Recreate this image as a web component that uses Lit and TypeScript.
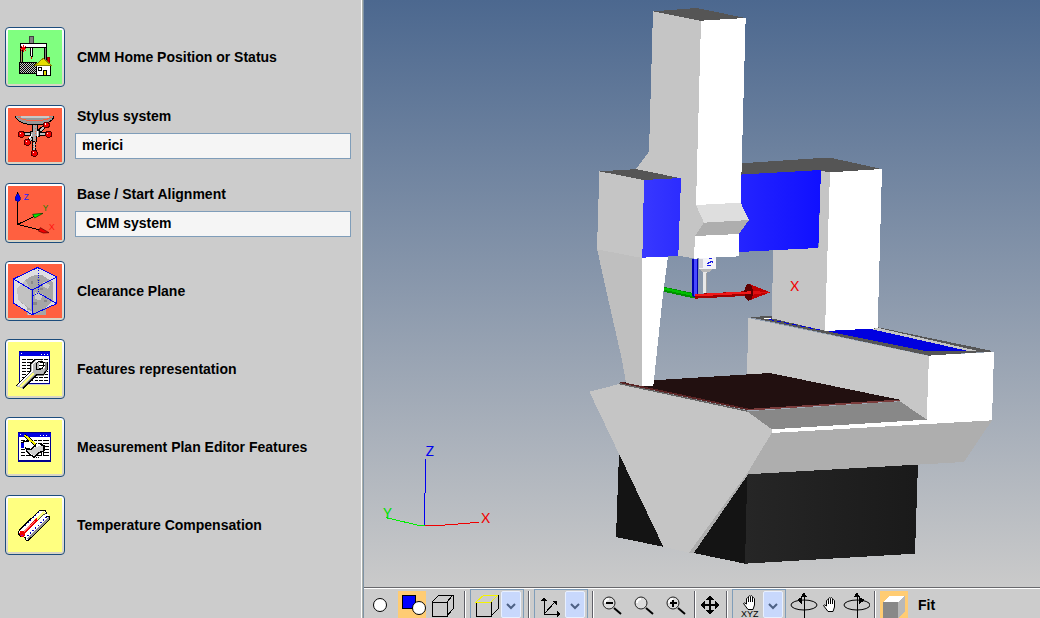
import { LitElement, html, svg, css } from "lit";
import { customElement } from "lit/decorators.js";

const homeIcon = svg`
  <defs><pattern id="mesh" width="6" height="6" patternUnits="userSpaceOnUse">
    <rect width="6" height="6" fill="#c8c8c8"/><rect width="3" height="3" fill="#000"/><rect x="3" y="3" width="3" height="3" fill="#000"/>
  </pattern></defs>
  <g stroke="#000" stroke-width="3">
    <rect x="89" y="49" width="12" height="22" fill="#808080" stroke="#404040"/>
    <rect x="62" y="82" width="6" height="46" fill="#a8a860"/>
    <rect x="132" y="82" width="8" height="40" fill="#808080"/>
    <rect x="62" y="70" width="78" height="12" fill="#fff"/>
    <path d="M91 82V105L95 112L98 105V82Z" fill="#fff"/>
    <rect x="58" y="127" width="52" height="34" fill="url(#mesh)"/>
    <rect x="142" y="112" width="6" height="16" fill="#e00000" stroke="#900000"/>
    <rect x="109" y="135" width="43" height="31" fill="#fff"/>
    <path d="M130 115L105 136H154Z" fill="#e6de00" stroke="#8a8400"/>
    <rect x="115" y="143" width="9" height="9" fill="#fff"/>
    <path d="M131 166V152H140V166" fill="#e6de00"/>
  </g>
  <path d="M95 112V118M70 76V96M61 86H79M64 79L77 93M77 79L64 93" stroke="#f00000" stroke-width="3"/>`;

const stylusIcon = svg`
  <path d="M46 289H162C160 301 144 309 126 312H86C64 309 49 302 46 289Z" fill="#989898"/>
  <path d="M54 291C66 300 82 302 104 302C130 302 146 298 156 291" fill="none" stroke="#ff6040" stroke-width="3"/>
  <path d="M64 291H148" stroke="#c8c8c8" stroke-width="6"/>
  <path d="M46 289C49 302 64 309 86 313H126C144 309 160 301 162 289" fill="none" stroke="#000" stroke-width="3"/>
  <path d="M104 342H140M64 343H92M84 366L104 344M110 340L136 318M103 352V396" stroke="#000" stroke-width="12"/>
  <path d="M104 342H140M64 343H92M84 366L104 344M110 340L136 318M103 352V396" stroke="#c0c0c0" stroke-width="6"/>
  <path d="M97 314H112V332H118V350H110V364H96V352H90V334H97Z" fill="#a8a8a8" stroke="#000" stroke-width="3"/>
  <path d="M106 316V388M100 366V390" stroke="#ff6040" stroke-width="3" stroke-dasharray="3 5"/>
  <path d="M112 334V350M96 344L88 356" stroke="#fff" stroke-width="3"/>
  ${[[64, 343], [146, 343], [139, 315], [82, 367], [103, 400]].map(([x, y]) => svg`
    <circle cx=${x} cy=${y} r="9" fill="#f00000" stroke="#500000" stroke-width="3"/>
    <rect x=${x - 5} y=${y - 5} width="4" height="4" fill="#fff"/>`)}`;

const axesIcon = svg`
  <path d="M53 78V148L104 124M53 148L120 165" fill="none" stroke="#000" stroke-width="3"/>
  <path d="M53 52L46 66V76L53 80L60 76V66Z" fill="#0000f0" stroke="#000080" stroke-width="2"/>
  <path d="M129 115L98 118L104 129Z" fill="#00f000" stroke="#003000" stroke-width="2" shape-rendering="auto"/>
  <path d="M147 173L121 158L115 168L130 174Z" fill="#f00000" stroke="#500000" stroke-width="2" shape-rendering="auto"/>
  <path d="M53 50L51 56H55Z" fill="#000"/>
  <g class="axis"><text x="71" y="74" font-size="25" fill="#2020ff">Z</text>
  <text x="128" y="109" font-size="25" fill="#208000">Y</text>
  <text x="146" y="166" font-size="27" fill="#ff1010">X</text></g>`;

const clearanceIcon = svg`
  <path d="M40 312L114 277L170 306V386L96 419L40 384Z" fill="#dedee2"/>
  <path d="M50 342L78 314L96 302L126 300L160 322V376L138 396V419H82V398L56 376Z" fill="#a6a6a6"/>
  <path d="M50 342L76 316L94 346V404L56 376Z" fill="#c2c2c2"/>
  <path d="M82 404L98 410V419H84ZM106 352L128 358L122 376L106 372ZM128 320L150 330L144 342L128 334Z" fill="#cdcdcd"/>
  <path d="M92 318H98V326H92ZM112 312H120V318H112ZM120 338H128V345H120ZM100 382H110V390H100ZM132 374H140V382H132Z" fill="#888"/>
  <path d="M40 384L62 402L76 408" stroke="#ff6040" stroke-width="5" fill="none"/>
  <path d="M40 312L114 277L170 306V386L96 419L40 384ZM40 312L96 345L170 306M96 345V419M116 354L170 386" fill="none" stroke="#0000f0" stroke-width="3"/>
  <path d="M115 279V354L96 364" fill="none" stroke="#0000f0" stroke-width="3" stroke-dasharray="3 4"/>`;

const sheet = (x: number, y: number, w: number, h: number, lines: number) => svg`
  <rect x=${x} y=${y} width=${w} height=${h} fill="#fff"/>
  <path d=${Array.from({ length: lines }, (_, i) => `M${x + 9} ${y + 25 + i * 9}H${x + w - 6}`).join("")} stroke="#000" stroke-width="3" stroke-dasharray="12 4 18 4 9 4"/>
  <rect x=${x + 1} y=${y + 1} width=${w - 3} height=${h - 2} fill="none" stroke="#000090" stroke-width="3"/>
  <rect x=${x} y=${y} width=${w} height="16" fill="#0000e0"/>
  <path d="M${x + 6} ${y + 8}H${x + 9}M${x + 66} ${y + 10}H${x + 69}M${x + 75} ${y + 10}H${x + 78}M${x + 84} ${y + 10}H${x + 87}" stroke="#fff" stroke-width="3"/>
  <path d="M${x} ${y + 1}H${x + w}" stroke="#000090" stroke-width="3"/>`;

const wrenchIcon = svg`
  <rect x="60" y="146" width="90" height="8" fill="#d0d0d0"/>
  ${sheet(57, 51, 93, 99, 8)}
  <path d="M48 156L92 112V92L106 76H130L116 88V104H132L141 90V108L130 122H110L68 164Z" fill="#b8b8b8"/>
  <path d="M68 164L110 122H130L139 108V84" fill="none" stroke="#808080" stroke-width="6"/>
  <path d="M60 158L100 118" stroke="#ffff80" stroke-width="7"/>
  <path d="M54 154L97 111V92L108 81H124" fill="none" stroke="#fff" stroke-width="4"/>
  <path d="M48 156L92 112V90L106 76H130M128 82H116L108 90V106H122L130 98V84M141 88V108L130 122H110L68 164" fill="none" stroke="#000" stroke-width="3"/>`;

const editorIcon = svg`
  ${sheet(54, 294, 99, 90, 6)}
  <path d="M56 382H151" stroke="#000090" stroke-width="6"/>
  <path d="M66 334L78 322L108 324L118 332L134 330V350L114 358L102 370L76 354L88 344L66 342Z" fill="#fff"/>
  <path d="M78 350L92 346L118 336L134 332L128 352L108 368Z" fill="#cfcfcf"/>
  <path d="M64 326L78 322L92 320M74 342L92 346L108 334M78 348L86 358L102 370L116 356L132 350V334L120 332M94 324L108 334" fill="none" stroke="#000" stroke-width="4"/>
  <path d="M100 370H116M122 360H134M112 364H126" stroke="#000" stroke-width="5" stroke-dasharray="4 3"/>
  <rect x="63" y="328" width="8" height="14" fill="#0000e0"/>
  <path d="M74 304L108 333" stroke="#000" stroke-width="9"/>
  <path d="M73 303L106 331" stroke="#f4f000" stroke-width="6"/>`;

const temperatureIcon = svg`
  <path d="M56 140L116 80H136L147 96V106L86 168H76L72 156L58 152Z" fill="#fff"/>
  <path d="M84 168L147 108V98L82 162Z" fill="#909090"/>
  <path d="M66 132L118 82M82 156L142 98" stroke="#0000c0" stroke-width="4" stroke-dasharray="4 7"/>
  <path d="M104 112L134 84" stroke="#ffff80" stroke-width="9"/>
  <path d="M110 112L139 85" stroke="#000" stroke-width="2"/>
  <path d="M64 152L112 106" stroke="#f00000" stroke-width="8"/>
  <path d="M72 142L106 110" stroke="#ff8080" stroke-width="3"/>
  <circle cx="67" cy="150" r="9" fill="#f00000"/>
  <rect x="63" y="152" width="6" height="5" fill="#a000c0"/>
  <path d="M56 140L118 80H136L141 88M138 98L147 97V108L86 168H78L74 158M56 140V150L62 158" fill="none" stroke="#000" stroke-width="3"/>`;

const ORIGIN: Record<string, number> = { home: 30, stylus: 264, axes: 33, clearance: 267, wrench: 24, editor: 258, temperature: 42 };
const ICONS: Record<string, unknown> = {
  home: homeIcon, stylus: stylusIcon, axes: axesIcon, clearance: clearanceIcon,
  wrench: wrenchIcon, editor: editorIcon, temperature: temperatureIcon,
};

const ROWS = [
  { icon: "home", tone: "green", label: "CMM Home Position or Status" },
  { icon: "stylus", tone: "red", label: "Stylus system", value: "merici" },
  { icon: "axes", tone: "red", label: "Base / Start Alignment", value: " CMM system" },
  { icon: "clearance", tone: "red", label: "Clearance Plane" },
  { icon: "wrench", tone: "yellow", label: "Features representation" },
  { icon: "editor", tone: "yellow", label: "Measurement Plan Editor Features" },
  { icon: "temperature", tone: "yellow", label: "Temperature Compensation" },
];

@customElement("setup-panel")
class SetupPanel extends LitElement {
  static styles = css`
    :host { display: flex; flex-direction: column; gap: 18px; box-sizing: border-box; padding: 27px 12px 27px 5px;
      background: #cccccc; border-right: 1px solid #7f93a5; box-shadow: inset -1px 0 #a9aea9, inset -2px 0 #fff;
      font: bold 14px/20px "Liberation Sans", Arial, sans-serif; color: #000; }
    .row { display: flex; align-items: center; gap: 10px; height: 60px; }
    .tile { flex: none; width: 60px; height: 60px; padding: 2px; border: 1px solid #1c4c7c; border-radius: 4px;
      background: linear-gradient(#fff, #e4e4ec 50%, #d8d4c4); }
    .tile svg { display: block; width: 54px; height: 54px; }
    .green { background: #80ff80; }
    .red { background: #ff6040; }
    .yellow { background: #ffff80; }
    .axis { font-family: "Liberation Sans", sans-serif; font-weight: normal; }
    .label { padding-left: 2px; white-space: nowrap; }
    .field { flex: 1; min-width: 0; display: flex; flex-direction: column; gap: 7px; padding-bottom: 5px; }
    .input { box-sizing: border-box; width: 100%; height: 26px; margin: 0; padding: 0 6px 2px; border: 1px solid #7f9db9;
      background: #f5f5f5; font: inherit; color: inherit; outline: none; }
  `;
  render() {
    return ROWS.map((r) => html`
      <div class="row">
        <button class="tile" aria-label=${r.label}>
          <svg class=${r.tone} viewBox="24 ${ORIGIN[r.icon]} 162 162" shape-rendering="crispEdges" fill="none">${ICONS[r.icon]}</svg>
        </button>
        ${r.value
          ? html`<div class="field"><label class="label" for=${r.icon}>${r.label}</label><input class="input" id=${r.icon} .value=${r.value} /></div>`
          : html`<span class="label">${r.label}</span>`}
      </div>`);
  }
}

@customElement("machine-view")
class MachineView extends LitElement {
  static styles = css`
    :host { display: block; min-height: 0; background: linear-gradient(#4c688f, #cacaca); overflow: hidden; }
    .scene { display: block; width: 100%; height: 100%; }
    .axis { font-family: "Lato", "Liberation Sans", sans-serif; font-weight: 400; font-size: 41px; }
  `;
  render() {
    return html`<svg class="scene" viewBox="0 0 2028 1761" shape-rendering="crispEdges" role="img" aria-label="Coordinate measuring machine">
      <defs>
        <linearGradient id="beam"><stop stop-color="#2424ff"/><stop offset="1" stop-color="#1010ff"/></linearGradient>
        <linearGradient id="head"><stop stop-color="#3838ff"/><stop offset="1" stop-color="#2c2cff"/></linearGradient>
        <linearGradient id="base"><stop stop-color="#262626"/><stop offset="1" stop-color="#1a1a1a"/></linearGradient>
      </defs>
      <g transform="translate(648 0)">
        <path d="M117 1360L108 1611L495 1691L510 1420Z" fill="#141414"/>
        <path d="M502 1415L1014 1390L1005 1661L495 1691Z" fill="url(#base)"/>

        <path d="M507 951L575 948L890 981L1242 1054L1047 1066Z" fill="#555"/>
        <path d="M565 958L740 993L870 986L900 985L1190 1052L1040 1054Z" fill="#c5c5c5"/>
        <path d="M565 958L740 993L868 986L1165 1053L1040 1054Z" fill="#0000e0"/>
        <path d="M505 954L1047 1068L1040 1260L955 1200L575 1125L501 1125Z" fill="#c7c7c7"/>
        <path d="M1047 1066L1242 1056L1236 1262L1040 1262Z" fill="#fff"/>

        <path d="M722 512L750 517L737 993L575 955L580 745L716 742Z" fill="#c5c5c5"/>
        <path d="M750 516L906 507L893 985L735 993Z" fill="#fff"/>
        <path d="M507 951L740 995L1040 1058L1240 1054L1047 1067Z" fill="#555"/>
        <path d="M548 956L573 953V959Z" fill="#fff"/>
        <path d="M566 958L730 992" stroke="#0000e0" stroke-width="3" stroke-dasharray="15 9"/>
        <path d="M483 490L720 474H755L905 507L750 517L722 512L483 526Z" fill="#555"/>
        <path d="M477 524L723 510L715 744L477 756Z" fill="url(#beam)"/>

        <path d="M138 1146L570 1119L958 1199L505 1229L118 1148Z" fill="#221010"/>
        <path d="M500 1234L960 1204L1042 1260L575 1290Z" fill="#888"/>
        <path d="M575 1288L1040 1259H1236L1236 1263L575 1300Z" fill="#fff"/>
        <path d="M28 1175L118 1152L500 1233L577 1289V1300L502 1422L330 1659L250 1640Z" fill="#c5c5c5"/>
        <path d="M500 1422L327 1658H342L505 1422Z" fill="#aeaeae"/>
        <path d="M575 1299L1236 1261L1152 1386L500 1423Z" fill="#aeaeae"/>
        <path d="M118 1151L500 1233" stroke="#666" stroke-width="4"/>
        <path d="M120 1147L508 1229" stroke="#5a2424" stroke-width="5"/>
        <path d="M505 1229L960 1201" stroke="#7a3c3c" stroke-width="5"/>

        <path d="M51 746L189 772L186 1158L138 1149L126 1080L84 895Z" fill="#bfbfbf"/>
        <path d="M187 771L264 767L246 910L220 1158H186Z" fill="#fff"/>
        <path d="M58 514L175 507L303 535L192 541Z" fill="#555"/>
        <path d="M58 514L192 540L187 774L51 748Z" fill="#c5c5c5"/>
        <path d="M192 540L305 534L297 768L187 773Z" fill="url(#head)"/>

        <path d="M219 34L365 62L350 612L375 667L348 706L345 776L295 767L303 535L168 507L207 455Z" fill="#c5c5c5"/>
        <path d="M219 34L350 24L497 54L363 63Z" fill="#555"/>
        <path d="M363 62L497 54L482 610L348 615Z" fill="#fff"/>
        <path d="M348 615L482 608L507 660L372 668Z" fill="#dedede"/>
        <path d="M372 668L507 660L477 702L345 708Z" fill="#aeaeae"/>
        <path d="M345 708L477 702V769L342 776Z" fill="#fff"/>

        <path d="M356 775L408 772V806H396L390 816H368L358 806Z" fill="#f4f4f8"/>
        <path d="M356 776H370V805H358Z" fill="#d0d0d8"/>
        <path d="M360 807H396L390 816H368Z" fill="#b8b8b8"/>
        <path d="M386 776H396M382 790L398 784V790M382 796H392" fill="none" stroke="#1818e8" stroke-width="4"/>
        <path d="M370 816H381V878H370Z" fill="#e8e8e8"/>
        <path d="M380 818V878" stroke="#a0a0a0" stroke-width="4"/>
        <path d="M252 868L345 888" stroke="#009000" stroke-width="15"/>
        <path d="M252 866L345 886" stroke="#00c000" stroke-width="7"/>
        <path d="M337 776H355V888L346 894L337 888Z" fill="#0000b0"/>
        <path d="M346 776V888" stroke="#4848ff" stroke-width="8"/>
        <path d="M345 889L512 880" stroke="#a00000" stroke-width="14"/>
        <path d="M345 886L512 877" stroke="#f01818" stroke-width="7"/>
        <path d="M506 851L571 877L506 902Z" fill="#c00000"/>
        <path d="M510 872L571 877L510 885Z" fill="#e01010"/>
        <ellipse cx="506" cy="877" rx="13" ry="25" fill="#600000"/>
        <path d="M492 879L512 878" stroke="#f01818" stroke-width="8"/>
        <text class="axis" x="631" y="872" fill="#f00000">X</text>
      </g>
      <g transform="translate(18 1305)" fill="none" stroke-width="3">
        <path d="M167 72V172L164 176V272" stroke="#0000f0"/>
        <path d="M164 272L212 271L327 262" stroke="#f00000"/>
        <path d="M164 272H150L48 248" stroke="#00f000"/>
        <g class="axis">
          <text x="167" y="62" fill="#0000f0">Z</text>
          <text x="40" y="249" fill="#00e000">Y</text>
          <text x="334" y="264" fill="#f00000">X</text>
        </g>
      </g>
    </svg>`;
  }
}

const box = (color: string) => svg`
  <path d="M476 602H491V616H476ZM491 616L498 609V595M491 602L498 595" stroke="#000"/>
  <path d="M476 602L484 595H498L491 602Z" stroke=${color}/>`;

const hand = (x: number, y: number) => svg`
  <g transform="translate(${x} ${y})" shape-rendering="auto">
    <path d="M3.5 9V3.5Q4.5 2 5.5 3.5V1.5Q6.5 0 7.5 1.5V1Q8.5 0 9.5 1.5V3Q10.5 2 11.5 3.5V10L10 14.500H5L.5 8.500Q1 7 3.500 9Z" fill="#fff" stroke="#000" stroke-width="1"/>
    <path d="M5.500 3.500V7M7.500 2V7M9.500 3V7" stroke="#000" stroke-width="1"/>
  </g>`;

const lens = (x: number, sign: string) => svg`
  <g shape-rendering="auto"><circle cx=${x + 7} cy="603" r="6" fill="#dcdcdc" stroke="#222" stroke-width="1"/>
  <path d="M${x + 3} 603A4 4 0 0 1 ${x + 7} 599" stroke="#fff" stroke-width="2"/>
  <path d="M${x + 12} 608L${x + 19} 614" stroke="#000" stroke-width="2"/></g>
  <path d=${sign} stroke="#000" stroke-width="2"/>`;

const spin = (x: number, arrow: string) => svg`
  <g shape-rendering="auto"><ellipse cx=${x} cy="605" rx="13" ry="5" stroke="#000"/></g>
  <path d="M${x} 594V618" stroke="#000" stroke-width="1"/><path d="M${x - 3} 597L${x} 592L${x + 3} 597Z" fill="#000"/>
  <path d=${arrow} fill="#000"/>`;

const art: Record<string, unknown> = {
  point: svg`<circle cx="380" cy="605" r="6.5" fill="#fff" stroke="#000" shape-rendering="auto"/>`,
  shapes: svg`<rect x="402" y="595" width="13" height="13" fill="#00f" stroke="#000"/><circle cx="419" cy="608" r="6.5" fill="#fff" stroke="#000" shape-rendering="auto"/>`,
  cube: svg`<path d="M432 602H447V616H432ZM432 602L439 595H453V609L447 616M447 602L453 595" stroke="#000"/>`,
  top: box("#f4f400"),
  frame: svg`<path d="M544 598V614H559M544 614L556 601" stroke="#000"/><path d="M541 601L544 597L547 601ZM557 611L561 614L557 617ZM552 601H557V606Z" fill="#000"/>`,
  out: lens(602, "M606 603H613"),
  zoom: lens(634, ""),
  in: lens(666, "M670 603H677M673 600V607"),
  move: svg`<path d="M710 598V612M704 605H717" stroke="#000" stroke-width="2"/><path d="M706 600L710 595L714 600ZM706 610L710 615L714 610ZM705 601L700 605L705 609ZM715 601L720 605L715 609Z" fill="#000"/>`,
  handxyz: svg`${hand(743, 595)}<text class="tiny" x="741" y="617">XYZ</text>`,
  left: spin(804, "M797 600L802 597V604Z"),
  hand: hand(823, 597),
  right: spin(857, "M865 600L859 597V604Z"),
  solid: svg`<path d="M883 602H898V618H883Z" fill="#888"/><path d="M883 602L890 596H905L898 602Z" fill="#fff"/><path d="M898 602L905 596V611L898 618Z" fill="#b8b8b8"/>`,
};

@customElement("view-toolbar")
class ViewToolbar extends LitElement {
  static styles = css`
    :host { display: flex; align-items: flex-end; gap: 4px; height: 29px; padding: 1px 0 0 2px;
      background: #cccccc; border-top: 1px solid #68686c; box-shadow: inset 0 1px #fff;
      font: bold 14px/20px "Liberation Sans", Arial, sans-serif; }
    .tool { flex: none; padding: 0; border: 0; background: none; }
    .tool svg { display: block; height: 27px; }
    .active { background: #ffcc73; }
    .sep { flex: none; width: 1px; height: 27px; background: #606068; border-right: 1px solid #fff; }
    .group { flex: none; box-sizing: border-box; width: 54px; height: 29px; display: flex; align-items: flex-end; justify-content: space-between;
      border: 1px solid #7f9db9; border-bottom: 0; padding-right: 2px; }
    .drop { box-sizing: border-box; width: 20px; height: 27px; padding: 0; border: 1px solid #e8f0ff; border-radius: 2px; background: #c8d8fc; }
    .drop svg { display: block; margin: 2px auto 0; width: 10px; height: 8px; }
    .tiny { font: 9px/9px "Liberation Sans", sans-serif; fill: #000; }
    .fit { padding: 0 6px 3px; border: 0; background: none; font: inherit; color: #000; }
  `;
  tool(name: string, x: number, w: number, active = false) {
    return html`<button class="tool ${active ? "active" : ""}" aria-label=${name}>
      <svg width=${w} viewBox="${x} 591 ${w} 27" fill="none" shape-rendering="crispEdges">${art[name]}</svg></button>`;
  }
  group(name: string, x: number) {
    return html`<div class="group">${this.tool(name, x, 29)}<button class="drop" aria-label="More"><svg viewBox="0 0 10 8"><path d="M1 2L5 6L9 2" fill="none" stroke="#4d6185" stroke-width="2"/></svg></button></div>`;
  }
  render() {
    const sep = html`<span class="sep"></span>`;
    return html`
      ${this.tool("point", 366, 28)}${this.tool("shapes", 398, 28, true)}${this.tool("cube", 430, 30)}${sep}
      ${this.group("top", 471)}${sep}${this.group("frame", 535)}${sep}
      ${this.tool("out", 598, 28)}${this.tool("zoom", 630, 28)}${this.tool("in", 662, 28)}${sep}
      ${this.tool("move", 700, 22)}${sep}${this.group("handxyz", 733)}
      ${this.tool("left", 790, 28)}${this.tool("hand", 822, 16)}${this.tool("right", 842, 28)}${sep}
      ${this.tool("solid", 880, 28, true)}<button class="fit">Fit</button>`;
  }
}

@customElement("app-root")
class AppRoot extends LitElement {
  static styles = css`
    :host { display: grid; grid-template-columns: 35% 1fr; min-height: 100vh; }
    .main { display: grid; grid-template-rows: 1fr auto; min-width: 0; }
  `;
  render() {
    return html`<setup-panel></setup-panel><div class="main"><machine-view></machine-view><view-toolbar></view-toolbar></div>`;
  }
}
